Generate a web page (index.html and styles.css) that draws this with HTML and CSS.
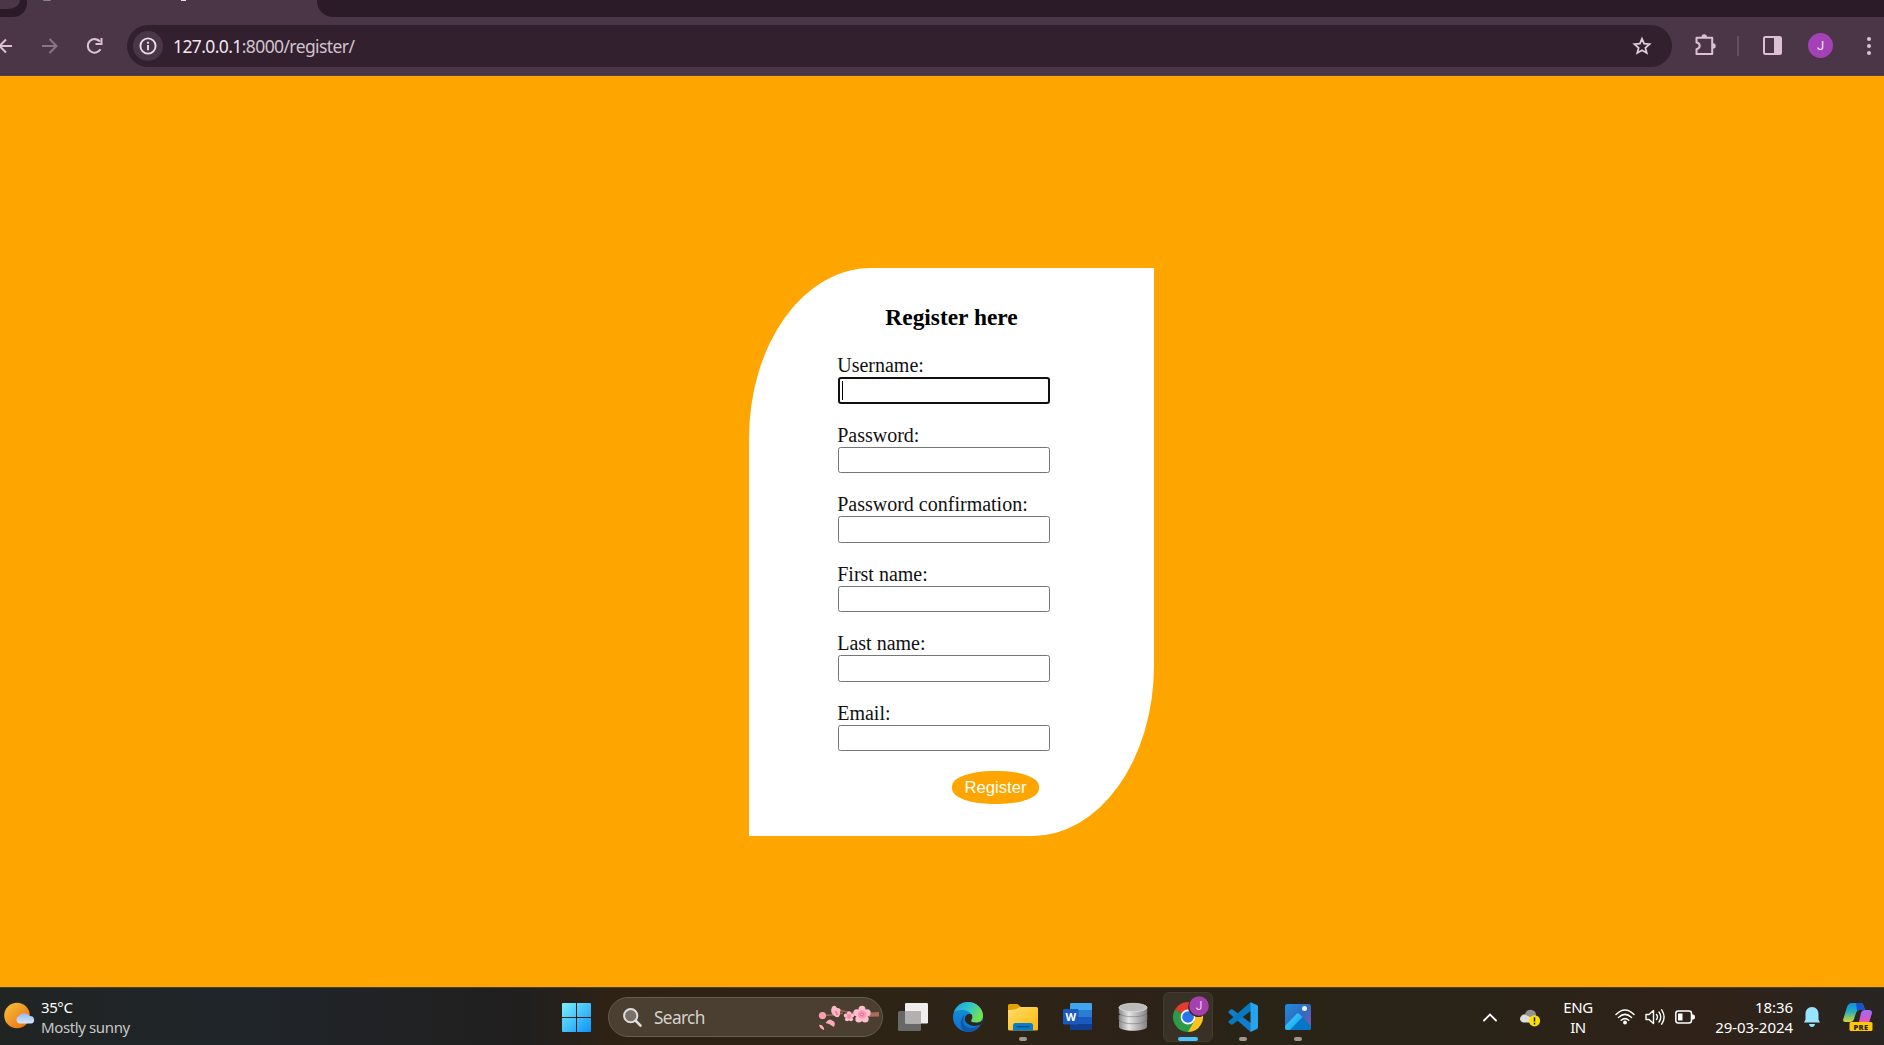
FILE: index.html
```html
<!DOCTYPE html>
<html lang="en">
<head>
<meta charset="utf-8">
<title>Register</title>
<link rel="stylesheet" href="styles.css">
</head>
<body>
<div class="screen">
  <header class="browser">
    <div class="tabstrip">
      <div class="tab-left"><div class="tab-search"></div></div>
      <div class="tab-active"><i class="favicon"></i><i class="descender"></i></div>
      <div class="tab-rest"></div>
    </div>
    <div class="toolbar">
      <div class="nav">
        <svg class="back" width="14" height="16" viewBox="0 0 14 16"><path d="M12 8H0M6 1.5L-.5 8L6 14.500" fill="none" stroke="#dcc0d6" stroke-width="2"/></svg>
        <svg class="forward" width="16" height="16" viewBox="0 0 16 16"><path d="M0 8H14M7.500 1L14.500 8L7.500 15" fill="none" stroke="#8b7486" stroke-width="2"/></svg>
        <svg class="reload" width="18" height="18" viewBox="0 0 18 18"><path d="M14.500 12.300A6.800 6.800 0 1 1 14 4.700" fill="none" stroke="#dcc0d6" stroke-width="2.100"/><path d="M16.500 1V8H9.500V6H14.500V1Z" fill="#dcc0d6"/></svg>
      </div>
      <div class="omnibox">
        <span class="site-info"><svg width="18" height="18" viewBox="0 0 18 18"><circle cx="9" cy="9" r="7.600" fill="none" stroke="#eadde7" stroke-width="1.900"/><path d="M9 8V13.200M9 4.800V6.700" stroke="#eadde7" stroke-width="1.900"/></svg></span>
        <span class="url"><b>127.0.0.1</b>:8000/register/</span>
        <svg class="star" width="20" height="20" viewBox="0 0 20 20"><path d="M10 2.800L12.100 7.600L17.500 8.100L13.400 11.700L14.700 17L10 14.200L5.300 17L6.600 11.700L2.500 8.100L7.900 7.600Z" fill="none" stroke="#dccdd9" stroke-width="1.800"/></svg>
      </div>
      <svg class="ext" width="22" height="22" viewBox="0 0 22 22"><path d="M2.500 3.800H18.200V20H2.500V15.200C6.800 14.300 6.800 9.400 2.500 8.500Z" fill="none" stroke="#dcc0d6" stroke-width="2" stroke-linejoin="round"/><path d="M7.500 3a2.700 2.700 0 0 1 5.400 0ZM19 9.200a2.700 2.700 0 0 1 0 5.400Z" fill="#dcc0d6"/></svg>
      <i class="divider"></i>
      <svg class="panel" width="19" height="19" viewBox="0 0 19 19"><rect x="1" y="1" width="17" height="17" rx="1.500" fill="none" stroke="#dcc0d6" stroke-width="2"/><path d="M11 1H18V18H11Z" fill="#dcc0d6"/></svg>
      <span class="avatar">J</span>
      <svg class="dots" width="4" height="18" viewBox="0 0 4 18"><g fill="#dcc0d6"><circle cx="2" cy="2" r="2"/><circle cx="2" cy="9" r="2"/><circle cx="2" cy="16" r="2"/></g></svg>
    </div>
  </header>

  <main class="page">
    <form class="card">
      <h3>Register here</h3>
      <div class="fields">
        <div class="field"><label for="u">Username:</label><div class="focus"><input class="focused" id="u" type="text"><i class="caret"></i></div></div>
        <div class="field"><label for="p">Password:</label><input id="p" type="password"></div>
        <div class="field"><label for="c">Password confirmation:</label><input id="c" type="password"></div>
        <div class="field"><label for="f">First name:</label><input id="f" type="text"></div>
        <div class="field"><label for="l">Last name:</label><input id="l" type="text"></div>
        <div class="field"><label for="e">Email:</label><input id="e" type="email"></div>
      </div>
      <button class="submit" type="button">Register</button>
    </form>
  </main>

  <footer class="taskbar">
    <svg width="0" height="0" class="defs"><defs>
      <linearGradient id="sun" x1="0" y1="0" x2="1" y2="1"><stop offset="0" stop-color="#f5c33b"/><stop offset="1" stop-color="#ee6a10"/></linearGradient>
      <linearGradient id="cloud" x1="0" y1="0" x2="0" y2="1"><stop offset="0" stop-color="#93b9f3"/><stop offset="1" stop-color="#d8e6fb"/></linearGradient>
      <linearGradient id="win" gradientUnits="userSpaceOnUse" x1="0" y1="0" x2="29" y2="29"><stop offset="0" stop-color="#7ceffe"/><stop offset="1" stop-color="#0a94f8"/></linearGradient>
      <linearGradient id="folder" x1="0" y1="0" x2="1" y2="1"><stop offset="0" stop-color="#ffdc66"/><stop offset="1" stop-color="#fbb90f"/></linearGradient>
      <linearGradient id="edge" x1="0" y1="0" x2="1" y2=".5"><stop offset="0" stop-color="#169fdc"/><stop offset=".5" stop-color="#2fc4d0"/><stop offset="1" stop-color="#72e24c"/></linearGradient>
      <linearGradient id="edgeb" x1="0" y1="0" x2="0" y2="1"><stop offset="0" stop-color="#1993d8"/><stop offset="1" stop-color="#0c71d2"/></linearGradient>
      <linearGradient id="db" x1="0" y1="0" x2="1" y2="0"><stop offset="0" stop-color="#8b8b8b"/><stop offset=".35" stop-color="#e5e5e5"/><stop offset="1" stop-color="#838383"/></linearGradient>
      <linearGradient id="photo" x1="0" y1="0" x2="1" y2="1"><stop offset="0" stop-color="#1d8ede"/><stop offset=".5" stop-color="#326bc0"/><stop offset="1" stop-color="#8652b4"/></linearGradient>
      <linearGradient id="hill" x1="0" y1="0" x2="1" y2="1"><stop offset="0" stop-color="#45d7ff"/><stop offset="1" stop-color="#0b9be7"/></linearGradient>
      <linearGradient id="cop1" x1="0" y1="0" x2="0" y2="1"><stop offset="0" stop-color="#128de8"/><stop offset=".45" stop-color="#26afbd"/><stop offset="1" stop-color="#d9d52f"/></linearGradient>
      <linearGradient id="cop2" x1="0" y1="0" x2="0" y2="1"><stop offset="0" stop-color="#9b6bfa"/><stop offset=".55" stop-color="#e256bd"/><stop offset="1" stop-color="#ff914c"/></linearGradient>
      <g id="blossom"><g fill="#ffbecb"><circle cx="0" cy="-5.300" r="3.500"/><circle cx="5.200" cy="-1.700" r="3.500"/><circle cx="3.200" cy="4.400" r="3.500"/><circle cx="-3.200" cy="4.400" r="3.500"/><circle cx="-5.200" cy="-1.700" r="3.500"/></g><circle r="4" fill="#f995ae"/><circle r="1.800" fill="#e46d9c"/><circle r=".8" fill="#ffdce0"/></g>
    </defs></svg>

    <div class="weather">
      <svg width="30" height="30" viewBox="0 0 30 30"><circle cx="14" cy="14.500" r="12.800" fill="url(#sun)"/><path d="M16 22.500a4 4 0 0 1 0-7.500a6 5.500 0 0 1 10.500 0a3.800 3.800 0 0 1 1.500 7.500Z" fill="url(#cloud)"/></svg>
      <div class="lines"><span class="temp">35°C</span><span class="sky">Mostly sunny</span></div>
    </div>

    <div class="start"><svg width="29" height="29" viewBox="0 0 29 29"><path d="M0 1Q0 0 1 0H14V14H0ZM15 0H28Q29 0 29 1V14H15ZM0 15H14V29H1Q0 29 0 28ZM15 15H29V28Q29 29 28 29H15Z" fill="url(#win)"/></svg></div>
    <div class="search">
      <svg width="19" height="19" viewBox="0 0 19 19"><circle cx="7.700" cy="7.700" r="6.600" fill="#777066" stroke="#dedddd" stroke-width="2"/><path d="M12.500 12.500L17.500 17.700" stroke="#dedddd" stroke-width="2.600" stroke-linecap="round"/></svg>
      <span>Search</span>
      <svg class="flowers" width="62" height="26" viewBox="0 0 62 26"><path d="M44 8L61 7V11.500L46 12Z" fill="#a86d58"/><path d="M5 10Q14 11 25 8M15 3Q27 7 34 8T47 9" fill="none" stroke="#9a6850" stroke-width="1.600"/><use href="#blossom" transform="translate(44 9.500)"/><use href="#blossom" transform="translate(31 11.500) scale(.6)"/><path d="M14 2Q17-1 19 3Q24 3 22 8Q22 13 18 12Q11 8 14 2Z" fill="#ffb9c6"/><circle cx="4.500" cy="10.500" r="3.600" fill="#f99fb3"/><path d="M7.500 18Q11 12 15 16Q18 17 16 22L11 19ZM1 20Q4 19 6 23V25Q2 24 1 20Z" fill="#fda9ba"/><path d="M17.500 6L19.500 10" stroke="#ee7f9a" stroke-width="2"/></svg>
    </div>

    <div class="apps">
      <div class="app"><svg width="30" height="30" viewBox="0 0 30 30"><rect y="9" width="23" height="20" rx="1.500" fill="#686866"/><rect x="7" y="1" width="23" height="20.500" rx="1.200" fill="#eee"/><path d="M7 9H23V21.500H8.200Q7 21.500 7 20.500Z" fill="#b2b1af"/></svg></div>
      <div class="app"><svg width="30" height="30" viewBox="0 0 30 30"><circle cx="15" cy="15" r="15" fill="url(#edgeb)"/><path d="M1 10Q5 0 15 0C23 0 30 6 30 13.500C30 18 27 21 22 20.500C18 20.500 17.500 19 19 17C20 12 16 8.500 10 8Q4 7.500 1 10Z" fill="url(#edge)"/><path d="M12 13C8 19 11 26 18 26Q24 26 28 22C25 28 19 31 13 29.800C6 27 6 17 12 13Z" fill="#1258a8"/><path d="M18.700 12.500C13 10 9.500 17 13.500 21Q19 26 28 22.500L30 18Q27 21.500 22 20.600C18 20.500 17.300 19 18.600 17.300Q20 15 18.700 12.500Z" fill="#2c2519"/></svg></div>
      <div class="app run"><svg width="30" height="30" viewBox="0 0 30 30"><path d="M0 3.500Q0 2 1.500 2H9.500L13 5H28V10H0Z" fill="#e3a006"/><path d="M0 8Q7 8 10 6L12 5H28.500Q30 5 30 6.500V27Q30 28.500 28.500 28.500H1.500Q0 28.500 0 27Z" fill="url(#folder)"/><path d="M5 28.500V23.500Q5 21 7.500 21H22.500Q25 21 25 23.500V28.500Z" fill="#087dcb"/><path d="M8.500 24.700H21.500" stroke="#0a4a83" stroke-width="1.300"/></svg></div>
      <div class="app"><svg width="30" height="30" viewBox="0 0 30 30"><path d="M7 2.200Q7 1 8.200 1H28Q29 1 29 2.200V8H7Z" fill="#41a5ee"/><path d="M7 8H29V15H7Z" fill="#2b7cd3"/><path d="M7 15H29V22H7Z" fill="#185abd"/><path d="M7 22H29V27Q29 28 28 28H8Q7 28 7 27Z" fill="#103f91"/><rect y="7" width="15.500" height="15.500" rx="1.200" fill="#185abd"/><text x="7.700" y="18.500" text-anchor="middle" class="word">W</text></svg></div>
      <div class="app"><svg width="30" height="30" viewBox="0 0 30 30"><g fill="url(#db)"><path d="M1 19V25C3 30 27 30 29 25V19Z"/><path d="M1 13V18C3 23 27 23 29 18V12Z" stroke="#747474" stroke-width=".6"/><path d="M1 5V11C3 16 27 16 29 11V5Z" stroke="#747474" stroke-width=".6"/></g><ellipse cx="15" cy="5.500" rx="14" ry="4.200" fill="#bbb" stroke="#ddd" stroke-width=".7"/></svg></div>
      <div class="app active"><svg width="36" height="36" viewBox="-3 -6 36 36"><path d="M15 15L2 7.500A15 15 0 0 1 28 7.500Z" fill="#e33b2e"/><path d="M15 15H28.500V7.500H28A15 15 0 0 1 15 30Z" fill="#fcc31e"/><path d="M15 15L2 7.500A15 15 0 0 0 15 30L21.500 18.700Z" fill="#2b9b48"/><path d="M15 8H28" stroke="#e33b2e" stroke-width="1"/><circle cx="15" cy="15" r="7.400" fill="#fff"/><circle cx="15" cy="15" r="5.800" fill="#2874e8"/><circle cx="25" cy="5" r="10" fill="#322a23"/><circle cx="26" cy="4" r="9.800" fill="#a541ad"/><text x="26" y="8.300" text-anchor="middle" class="badge">J</text></svg></div>
      <div class="app run"><svg width="30" height="30" viewBox="0 0 30 30"><path d="M.8 9.200L3 7.300Q4 7 5 7.700L24 22V29Q23 30 21.500 29L.8 11Q0 10 .8 9.200Z" fill="#137ccc"/><path d="M.8 19L21.500 1Q23 0 24 1V8L5 22.300Q4 23 3 22.500L.8 20.800Q0 20 .8 19Z" fill="#0878bf"/><path d="M22.500.3L29 3Q30 3.600 30 5V25Q30 26.500 29 27L22.500 29.900Z" fill="#25a3ee"/></svg></div>
      <div class="app run"><svg width="30" height="30" viewBox="0 0 30 30"><rect x="2" y="2" width="26" height="26" rx="2.500" fill="url(#photo)"/><path d="M2 24L13.500 12Q15 10.700 16.500 12L28 24V25.500Q28 28 25.500 28H4.500Q2 28 2 25.500Z" fill="#0876c8"/><path d="M2.500 23.500L13.500 12Q15 10.700 16.500 12L19.500 15L7 28H4.500Q2 28 2 25.500Z" fill="url(#hill)"/><circle cx="21.500" cy="6.500" r="2.500" fill="#e5f2fb"/></svg></div>
    </div>

    <div class="tray">
      <svg class="chev" width="14" height="9" viewBox="0 0 14 9"><path d="M1 7.500L7 1.500L13 7.500" fill="none" stroke="#fff" stroke-width="1.800" stroke-linecap="round"/></svg>
      <svg class="onedrive" width="20" height="18" viewBox="0 0 20 18"><path d="M3 13Q-1 10 1 7Q2 5 5 5Q7 0 12 1Q16 2 16 6L16 13Z" fill="#929292"/><path d="M3 13.500Q-1 12 .5 8.500Q2 5 6 6L14 10L11 13.500Z" fill="#ddd"/><circle cx="14.500" cy="11.800" r="5.600" fill="#fce100"/><path d="M14.500 8.300V12.600M14.500 13.800V15.500" stroke="#272213" stroke-width="1.500"/></svg>
      <div class="lang"><span>ENG</span><span>IN</span></div>
      <svg class="wifi" width="20" height="16" viewBox="0 0 20 16"><g fill="none" stroke="#fff" stroke-width="1.500" stroke-linecap="round"><path d="M1 5.500Q10-3.500 19 5.500M3.500 8.500Q10 2.300 16.500 8.500M6.200 11.300Q10 7.900 13.800 11.300"/></g><circle cx="10" cy="13.500" r="1.900" fill="#fff"/></svg>
      <svg class="sound" width="20" height="18" viewBox="0 0 20 18"><g fill="none" stroke="#fff" stroke-width="1.400" stroke-linejoin="round" stroke-linecap="round"><path d="M1 6.500V11.500H4L8.500 15.500V2.500L4 6.500Z"/><path d="M11.500 6.500Q13.500 9 11.500 11.500M14 4Q17.500 9 14 14M16.700 1.800Q21.500 9 16.700 16.200"/></g></svg>
      <svg class="battery" width="20" height="14" viewBox="0 0 20 14"><rect x=".8" y="1" width="15.700" height="12" rx="2.500" fill="none" stroke="#fff" stroke-width="1.500"/><path d="M3 3.500H7.500V10.500H3Z" fill="#fff"/><path d="M17 4.500H18.500Q20 5 20 7T18.500 9.500H17Z" fill="#fff"/></svg>
      <div class="clock"><span>18:36</span><span>29-03-2024</span></div>
      <svg class="bell" width="16" height="20" viewBox="0 0 16 20"><path d="M0 15.500L1.500 12.500V7C1.500 3 4 0 8 0S14.500 3 14.500 7V12.500L16 15.500ZM5 17H11Q10.500 20 8 20T5 17Z" fill="#97e5ff"/></svg>
      <svg class="copilot" width="30" height="30" viewBox="0 0 30 30"><path d="M0 18L4 5Q5.500 1 9 1H18Q20 1 21 5L22 8H16Q14 8 13 11L11 17Q10 20 7 20H2Q0 20 0 18Z" fill="url(#cop1)"/><path d="M13 1H18Q20 1 21 5L22 8H16L14 9Z" fill="#1953c9"/><path d="M29 11L25 24Q24 28 20 28H12L16 20L18 11Q19 8 22 8H26Q29 8 29 11Z" fill="url(#cop2)"/><rect x="6.500" y="20" width="23" height="9" rx="1.500" fill="#ffc60a"/><text x="18" y="27.500" text-anchor="middle" class="pre">PRE</text></svg>
    </div>
  </footer>
</div>
</body>
</html>
```
FILE: styles.css
```css
* { box-sizing: border-box; }
body { margin: 0; overflow: hidden; }
svg { display: block; flex: none; overflow: visible; }
.screen { width: 1884px; height: 1045px; display: flex; flex-direction: column; }

.browser { height: 76px; background: #4b3647; font-family: "Noto Sans", sans-serif; }
.tabstrip { height: 17px; display: flex; overflow: hidden; }
.tab-left { width: 27px; background: #2b1b29; border-bottom-right-radius: 14px; }
.tab-search { width: 20px; height: 9px; background: #4b3647; border-bottom-right-radius: 12px 9px; }
.tab-active { width: 290px; display: flex; }
.favicon { width: 8px; height: 1px; margin-left: 16px; background: #7d8790; border-radius: 0 0 4px 4px; }
.descender { width: 5px; height: 1px; margin-left: 130px; background: #e8dfe6; }
.tab-rest { flex: 1; background: #2b1b29; border-bottom-left-radius: 16px; }

.toolbar { height: 59px; display: flex; align-items: center; padding-bottom: 1px; border-bottom: 1px solid #534150; }
.nav { width: 127px; height: 42px; display: flex; align-items: center; }
.forward { margin-left: 28px; }
.reload { margin-left: 28px; }
.omnibox { width: 1545px; height: 42px; border-radius: 21px; background: #33202f; display: flex; align-items: center; padding-left: 6px; }
.site-info { width: 30px; height: 30px; border-radius: 50%; background: #4b3647; display: flex; align-items: center; justify-content: center; }
.url { margin-left: 10px; padding-top: 1px; font-size: 17.5px; letter-spacing: -.6px; color: #cfc4cd; white-space: nowrap; }
.url b { font-weight: 400; color: #f0e6ee; }
.star { margin-left: auto; margin-right: 20px; }
.ext { margin-left: 22px; margin-top: -2px; }
.divider { width: 2px; height: 20px; margin-left: 21px; background: #644f60; }
.panel { margin-left: 24px; }
.avatar { width: 25px; height: 25px; margin-left: 26px; border-radius: 50%; background: #a541b6; color: #f6e8f7; font: 13px/26px Roboto, sans-serif; text-align: center; }
.dots { margin-left: 34px; }

.page { height: 911px; background: orange; display: flex; padding: 192px 0 0 749px; }
.card { width: 405px; height: 568px; background: #fff; border-radius: 30% 0; padding: 36px 0 0 89px; font: 20px/23px "Liberation Serif", serif; color: #000; }
.card h3 { width: 227px; margin: 0 0 23px; font-size: 23.4px; line-height: 27px; text-align: center; }
.field { height: 69.6px; }
.field label { display: block; margin-left: -.8px; color: #111; }
.field input { display: block; width: 212px; height: 26.5px; border: 1px solid #767676; border-radius: 2.5px; background: #fff; padding: 1px 3px; outline: none; }
.focus { position: relative; }
.field .focused { height: 27px; border: 2px solid #101010; border-radius: 3px; }
.caret { position: absolute; left: 4px; top: 4px; width: 1px; height: 19px; background: #000; }
.submit { display: block; width: 87px; height: 33px; margin: -.6px 0 0 114px; border: 0; border-radius: 46%; padding: 0; background: orange; color: #fff; font: 16.67px/33px "Liberation Sans", sans-serif; }

.taskbar { height: 58px; display: flex; align-items: center; border-top: 1px solid #48433a; padding-top: 1px; background: linear-gradient(90deg, #202423 0, #20252a 250px, #211f1e 530px, #2e2214 610px, #2e2416 900px, #2d2217 1130px, #292416 1250px, #2a2318 1500px, #302218 1700px, #282522 1884px); font: 15px/20px "Noto Sans", sans-serif; color: #fff; }
.defs { position: absolute; }
.weather { width: 562px; display: flex; padding-left: 3px; align-items: center; }
.lines { margin-left: 8px; display: flex; flex-direction: column; }
.weather svg { margin-top: -2px; }
.temp { letter-spacing: -.4px; }
.sky { color: #c7c8c8; letter-spacing: -.38px; }
.start { width: 46px; }
.search { width: 275px; height: 40px; border: 1px solid #655b4e; border-radius: 20px; background: #4a3f31; display: flex; align-items: center; padding-left: 14px; font-size: 17.3px; color: #d6d2cd; }
.search span { margin-left: 12px; padding-top: 1px; letter-spacing: -.65px; }
.flowers { margin-left: auto; margin-right: 2px; margin-top: 2px; }
.apps { display: flex; gap: 5px; margin-left: 5px; }
.app { position: relative; width: 50px; height: 50px; display: flex; align-items: center; justify-content: center; }
.run::after, .active::after { content: ""; position: absolute; left: 21px; bottom: 1px; width: 8px; height: 4px; border-radius: 2px; background: #9d9790; }
.active { background: #393026; border: 1px solid #443b30; border-radius: 6px; }
.active svg { margin-top: -6px; }
.active::after { left: 14px; bottom: 0; width: 20px; background: #4cc2ff; }
.word { font: 700 11px "Open Sans", sans-serif; fill: #fff; }
.badge { font: 12px Roboto, sans-serif; fill: #efcaf0; }
.pre { font: 800 7.5px "Open Sans", sans-serif; fill: #2b2200; letter-spacing: .4px; }
.tray { margin-left: 160px; height: 50px; display: flex; align-items: center; }
.onedrive { margin-left: 23px; margin-top: 2px; }
.lang { width: 40px; margin-left: 18px; display: flex; flex-direction: column; text-align: center; letter-spacing: -.4px; }
.wifi { margin-left: 17px; }
.sound { margin-left: 10px; }
.battery { margin-left: 10px; }
.clock { width: 98px; display: flex; flex-direction: column; text-align: right; letter-spacing: -.05px; }
.bell { margin-left: 11px; }
.copilot { margin-left: 23px; }
```
